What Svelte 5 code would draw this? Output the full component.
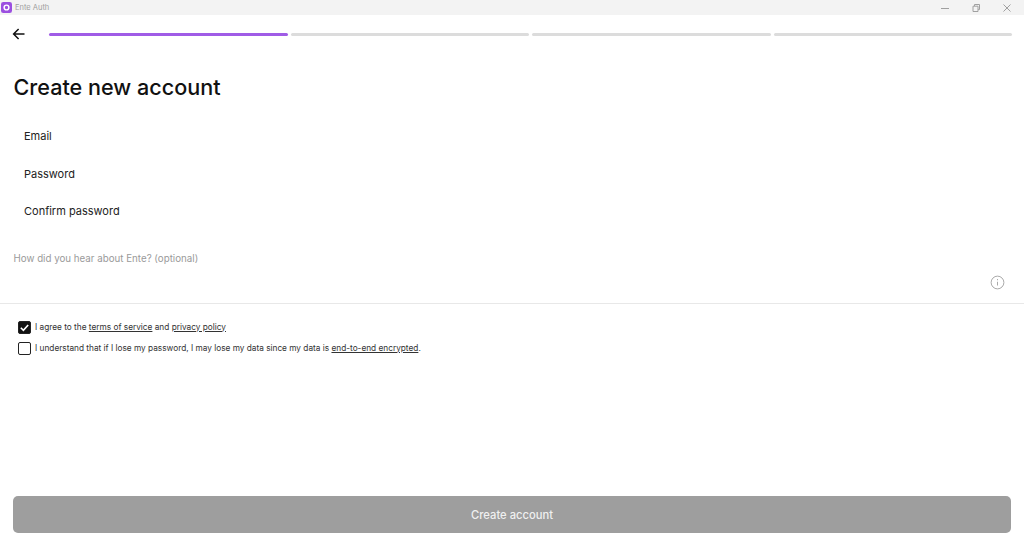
<script>
  const steps = [true, false, false, false];
  const fields = ['Email', 'Password', 'Confirm password'];
</script>

<div class="window">
  <header class="titlebar">
    <div class="brand">
      <svg class="logo" viewBox="0 0 12 12" width="11" height="11" aria-hidden="true">
        <rect width="12" height="12" rx="2.5" fill="#9b4fe0" />
        <circle cx="6" cy="6" r="2.6" fill="none" stroke="#fff" stroke-width="1.6" />
      </svg>
      <span>Ente Auth</span>
    </div>
    <div class="controls">
      <svg viewBox="0 0 10 10" width="10" height="10" aria-hidden="true"><path d="M1 5.5h8" /></svg>
      <svg viewBox="0 0 10 10" width="10" height="10" aria-hidden="true"><path d="M2 3.2h5v5.3H2zM3.5 3V1.5h5v5H7.2" /></svg>
      <svg viewBox="0 0 10 10" width="10" height="10" aria-hidden="true"><path d="M1.5 1.5l7 7M8.5 1.5l-7 7" /></svg>
    </div>
  </header>

  <nav class="topnav">
    <svg class="back" viewBox="0 0 14 14" width="14" height="14" aria-hidden="true">
      <path d="M12.5 7H1.8M6.6 2 1.6 7l5 5" />
    </svg>
    <div class="progress">
      {#each steps as active}
        <span class="step" class:active></span>
      {/each}
    </div>
  </nav>

  <main class="content">
    <h1>Create new account</h1>

    <div class="fields">
      {#each fields as field}
        <div class="field">{field}</div>
      {/each}
    </div>

    <div class="hear">
      <div class="hear-label">How did you hear about Ente? (optional)</div>
      <div class="hear-input">
        <svg viewBox="0 0 16 16" width="15" height="15" aria-hidden="true">
          <circle cx="8" cy="8" r="6.8" />
          <path d="M8 7.2v4M8 4.3v1.3" />
        </svg>
      </div>
    </div>

    <div class="consents">
      <div class="consent">
        <span class="box checked">
          <svg viewBox="0 0 12 12" width="11" height="11" aria-hidden="true"><path d="M2 6.3l2.8 2.7L10 3.3" /></svg>
        </span>
        <span class="copy">I agree to the <u>terms of service</u> and <u>privacy policy</u></span>
      </div>
      <div class="consent">
        <span class="box"></span>
        <span class="copy">I understand that if I lose my password, I may lose my data since my data is <u>end-to-end encrypted</u>.</span>
      </div>
    </div>
  </main>

  <footer class="footer">
    <button class="submit" disabled>Create account</button>
  </footer>
</div>

<style>
  :global(body) {
    margin: 0;
    background: #fff;
  }

  .window {
    width: 1024px;
    height: 544px;
    display: flex;
    flex-direction: column;
    font-family: Inter, "Liberation Sans", sans-serif;
    color: #1a1a1a;
    overflow: hidden;
  }

  .titlebar {
    height: 15px;
    flex: none;
    background: #f3f3f3;
    display: flex;
    align-items: center;
    justify-content: space-between;
  }

  .brand {
    display: flex;
    align-items: center;
    gap: 3px;
    padding-left: 1px;
    font-size: 7.5px;
    color: #a0a0a0;
  }

  .logo {
    display: block;
  }

  .controls {
    display: flex;
    align-items: center;
    gap: 21px;
    padding-right: 12px;
  }

  .controls svg {
    display: block;
    fill: none;
    stroke: #a0a0a0;
    stroke-width: 1;
  }

  .topnav {
    height: 38px;
    flex: none;
    display: flex;
    align-items: center;
    padding: 0 12px 0 12px;
    gap: 23px;
    box-sizing: border-box;
  }

  .back {
    flex: none;
    fill: none;
    stroke: #111;
    stroke-width: 1.5;
  }

  .progress {
    flex: 1;
    display: flex;
    gap: 3px;
  }

  .step {
    flex: 1;
    height: 3px;
    border-radius: 2px;
    background: #dcdcdc;
  }

  .step.active {
    background: #a05ce6;
  }

  .content {
    flex: 1;
    display: flex;
    flex-direction: column;
    min-height: 0;
  }

  h1 {
    margin: 20px 0 0 13.5px;
    font-size: 21.6px;
    line-height: 28px;
    font-weight: 500;
    color: #111;
  }

  .fields {
    display: flex;
    flex-direction: column;
    gap: 21.5px;
    margin-top: 27px;
    padding-left: 24px;
  }

  .field {
    font-size: 11px;
    line-height: 16px;
    color: #222;
  }

  .hear {
    margin-top: 33px;
    border-bottom: 1px solid #e8e8e8;
  }

  .hear-label {
    padding-left: 13.5px;
    font-size: 9.75px;
    line-height: 14px;
    color: #9a9a9a;
  }

  .hear-input {
    display: flex;
    justify-content: flex-end;
    padding: 9px 19px 13px 0;
  }

  .hear-input svg {
    display: block;
    fill: none;
    stroke: #a3a3a3;
    stroke-width: 1;
  }

  .consents {
    display: flex;
    flex-direction: column;
    gap: 8px;
    margin-top: 17px;
    padding-left: 18px;
  }

  .consent {
    display: flex;
    align-items: center;
    gap: 4px;
    height: 13px;
    font-size: 8.27px;
    color: #333;
  }

  .copy {
    margin-top: -2px;
  }

  .box {
    width: 13px;
    height: 13px;
    flex: none;
    box-sizing: border-box;
    border: 1.5px solid #222;
    border-radius: 2px;
    display: flex;
    align-items: center;
    justify-content: center;
  }

  .box.checked {
    background: #111;
  }

  .box svg {
    fill: none;
    stroke: #fff;
    stroke-width: 1.8;
  }

  .footer {
    flex: none;
    padding: 0 13px 11px;
  }

  .submit {
    display: block;
    width: 100%;
    height: 37px;
    border: 0;
    border-radius: 5px;
    padding: 1px 0 0;
    background: #9e9e9e;
    color: #f0f0f0;
    font: 500 11.2px Inter, "Liberation Sans", sans-serif;
  }
</style>
